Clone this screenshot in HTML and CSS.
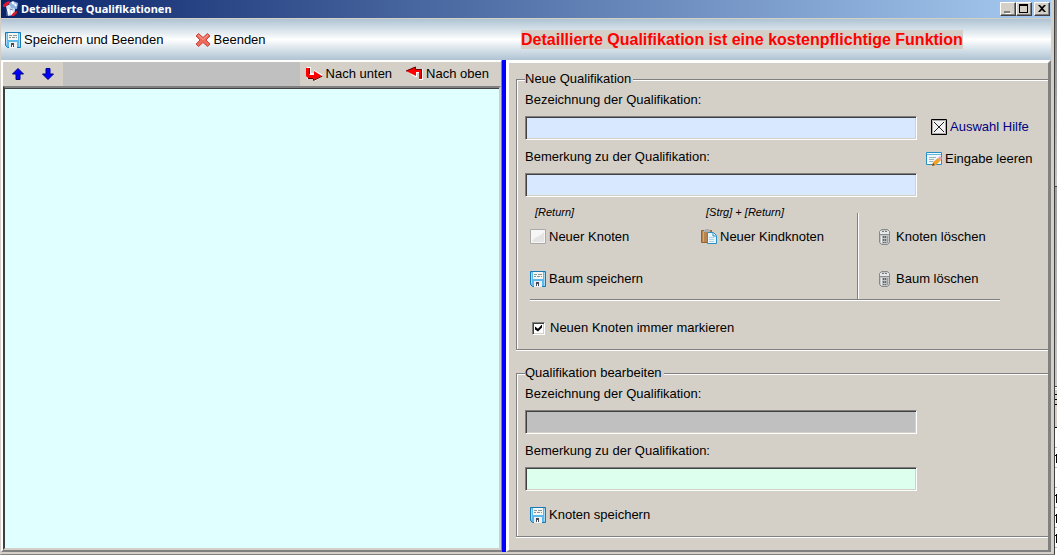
FILE: index.html
```html
<!DOCTYPE html>
<html lang="de">
<head>
<meta charset="utf-8">
<title>Detaillierte Qualifikationen</title>
<link rel="stylesheet" href="styles.css">
</head>

<body>
<svg class="defs" width="0" height="0" aria-hidden="true">
	<symbol id="disk" viewBox="0 0 16 16">
		<path d="M0.500 0.500h15v15h-13l-2-2z" fill="#5fb8ea" stroke="#1779b5"/>
		<path d="M1.500 1.500v11M14.500 1.500v13" stroke="#a5dcf8"/>
		<path d="M3 1h10v7H3z" fill="#f4f6f4"/>
		<path d="M4 3.500h3M8 3.500h4M4 5.500h2M7 5.500h3M11 5.500h1" stroke="#8a9694"/>
		<path d="M4 10h8v6H4z" fill="#edf0f2"/>
		<path d="M6 11h3v4H6z" fill="#444b52"/>
		<path d="M7 13h1v3H7z" fill="#fff"/>
	</symbol>
	<symbol id="bin" viewBox="0 0 16 16">
		<path d="M2.500 2.500l2-2h6l2 2v11l-2 2h-6l-2-2z" fill="#c3c5c6" stroke="#85898b"/>
		<path d="M3 2h9v3H3z" fill="#e6e7e7"/>
		<path d="M5 2h2v1H5zM8 2h2v1H8z" fill="#777"/>
		<path d="M3 5.500h9" stroke="#8c9092"/>
		<path d="M4.500 7v7" stroke="#eee"/>
		<path d="M6.500 7v7M8.500 7v7" stroke="#63686b" stroke-width="1.500" stroke-dasharray="2 1"/>
		<path d="M10.500 7v7" stroke="#9b9fa1"/>
	</symbol>
</svg>

<div class="desktop">
<div class="window">
	<div class="titlebar">
		<svg width="16" height="16" viewBox="0 0 16 16">
			<path d="M3 5l5-2 5 1-2 10-6 1z" fill="#cfe0f5"/>
			<path d="M6 2l4-2 5 2-1 6-6-1z" fill="#8fb2e0"/>
			<path d="M9 1l2 2M12 3l1 2M5 8l1 5M9 9v4" stroke="#fff" stroke-width="2"/>
			<path d="M0 6V4l3-3 4-1-1 3-4 3zM8 15l2-3 4-2v2l-3 3z" fill="#e0182a"/>
			<path d="M4 10v5M7 8l3 1" stroke="#6a86b8"/>
		</svg>
		<h1>Detaillierte Qualifikationen</h1>
		<button class="sys" type="button" aria-label="Minimieren"><svg width="12" height="10" viewBox="0 0 12 10"><path d="M3 9h6v1H4z" fill="#fff"/><path d="M2 7h6v2H2z" fill="#808080"/></svg></button>
		<button class="sys" type="button" aria-label="Maximieren"><svg width="12" height="10" viewBox="0 0 12 10"><path d="M1 0h9v9H1zM2 2v6h7V2z" fill="#000" fill-rule="evenodd"/></svg></button>
		<button class="sys close" type="button" aria-label="Schließen"><svg width="12" height="10" viewBox="0 0 12 10"><path d="M2 1h2l2 2 2-2h2L7 4.500 10 8H8L6 6 4 8H2l3-3.500z" fill="#000"/></svg></button>
	</div>

	<div class="toolbar">
		<div class="actions">
			<button class="tool" type="button"><svg width="16" height="16"><use href="#disk"/></svg>Speichern und Beenden</button>
			<button class="tool" type="button"><svg width="16" height="16" viewBox="0 0 16 16"><path d="M3.500 1.500L8 5.500l4.500-4 2.500 2.500L11 8l4 4-2.500 2.500L8 10.500l-4.500 4L1 12l4-4-4-4z" fill="#f0695a" stroke="#c8453a"/><path d="M3 3l5 4.500L13 3" fill="none" stroke="#f9a397"/></svg>Beenden</button>
		</div>
		<p class="notice"><strong>Detaillierte Qualifikation ist eine kostenpflichtige Funktion</strong></p>
	</div>

	<div class="main">
		<div class="left">
			<div class="treebar">
				<button class="arrow" type="button" aria-label="Hoch"><svg width="12" height="12" viewBox="0 0 12 12"><path d="M6 0.500l5.500 5.500H8v5.500H4V6H0.500z" fill="#00f" stroke="#000080"/></svg></button>
				<button class="arrow" type="button" aria-label="Runter"><svg width="12" height="12" viewBox="0 0 12 12"><path d="M6 11.500L0.500 6H4V0.500h4V6h3.500z" fill="#00f" stroke="#000080"/></svg></button>
				<span class="fill"></span>
				<button class="move" type="button"><svg width="18" height="16" viewBox="0 0 18 16"><path d="M1 1h4v6h3V4l9 5v1l-8 5H7v-2H1z" fill="#fff"/><path d="M0 2h3v7h5V5l8 5-8 4v-2H2l-2-2z" fill="#f00"/><path d="M3.500 2v6.500M2 12.500h5.500v2l9-4.500" fill="none" stroke="#600000"/></svg>Nach unten</button>
				<button class="move" type="button"><svg width="18" height="16" viewBox="0 0 18 16"><path d="M2 6l7 5h2V7h2v7h4V3h-6z" fill="#fff"/><path d="M0 5l9-4v2h7v10h-3V6h-3v4z" fill="#f00"/><path d="M0 5l9.500-4v2.500h6V12" fill="none" stroke="#600000"/></svg>Nach oben</button>
			</div>
			<div class="tree" role="tree" aria-label="Qualifikationen"></div>
		</div>

		<div class="splitter"></div>

		<div class="right">
			<fieldset>
				<legend>Neue Qualifikation</legend>
				<div class="top">
					<div class="fields">
						<label for="bez1">Bezeichnung der Qualifikation:</label>
						<input id="bez1" class="blue" type="text">
						<label for="bem1">Bemerkung zu der Qualifikation:</label>
						<input id="bem1" class="blue" type="text">
					</div>
					<div class="side">
						<button class="tool help" type="button"><svg width="16" height="16" viewBox="0 0 16 16"><path d="M0.500 0.500h15v15H0.500z" fill="#f2f2f2" stroke="#000"/><path d="M1.500 1.500h13v13h-13z" fill="none" stroke="#aaa"/><path d="M3 3l10 10M13 3L3 13" stroke="#222"/></svg>Auswahl Hilfe</button>
						<button class="tool" type="button"><svg width="16" height="16" viewBox="0 0 16 16"><path d="M0.500 1.500h15v12H0.500z" fill="#eef7fc" stroke="#2a8fc4"/><path d="M1 3.500h14" stroke="#64b9e4"/><path d="M3 6.500h7M3 8.500h5M3 10.500h4" stroke="#9fb3bd"/><path d="M6 15l1-4 5-4 3 2-5 5z" fill="#f2a22c"/><path d="M12 7l2-2 2 2-1 2z" fill="#e79ac0"/><path d="M6 15l1-3 2 2z" fill="#6b4a20"/></svg>Eingabe leeren</button>
					</div>
				</div>

				<div class="nodes">
					<div class="cell">
						<span class="key">[Return]</span>
						<button class="tool" type="button"><svg width="16" height="16" viewBox="0 0 16 16"><path d="M0.500 0.500h15v14H0.500z" fill="#f6f6f6" stroke="#aaa"/><path d="M2 13c2-6 7-4 12-10v10z" fill="#e4e4e4"/></svg>Neuer Knoten</button>
						<button class="tool" type="button"><svg width="16" height="16"><use href="#disk"/></svg>Baum speichern</button>
					</div>
					<div class="cell">
						<span class="key">[Strg] + [Return]</span>
						<button class="tool" type="button"><svg width="16" height="16" viewBox="0 0 16 16"><path d="M0.500 1.500h10v12H0.500z" fill="#b9854e" stroke="#946334"/><path d="M2.500 2v11" stroke="#d2a675"/><path d="M3 1l2-1h2l2 1v2H3z" fill="#a9b0b6"/><path d="M6.500 3.500h6l3 3v8h-9z" fill="#e9f6fd" stroke="#2f8fc0"/><path d="M12 4v3h3" fill="none" stroke="#2f8fc0"/><path d="M8 8.500h5M8 10.500h5M8 12.500h5" stroke="#a9d3e8"/></svg>Neuer Kindknoten</button>
					</div>
					<div class="cell delete">
						<button class="tool" type="button"><svg width="16" height="16"><use href="#bin"/></svg>Knoten löschen</button>
						<button class="tool" type="button"><svg width="16" height="16"><use href="#bin"/></svg>Baum löschen</button>
					</div>
				</div>

				<label class="check"><input type="checkbox" checked>Neuen Knoten immer markieren</label>
			</fieldset>

			<fieldset>
				<legend>Qualifikation bearbeiten</legend>
				<div class="fields">
					<label for="bez2">Bezeichnung der Qualifikation:</label>
					<input id="bez2" class="gray" type="text" readonly>
					<label for="bem2">Bemerkung zu der Qualifikation:</label>
					<input id="bem2" class="green" type="text">
				</div>
				<button class="tool save" type="button"><svg width="16" height="16"><use href="#disk"/></svg>Knoten speichern</button>
			</fieldset>
		</div>
	</div>
</div>

<!-- Rand des Fensters dahinter -->
<div class="behind">
	<div class="panel"></div>
	<div class="panel low"></div>
	<div class="head"></div>
	<div class="row"></div>
	<div class="row mark"></div>
	<div class="row"></div>
	<div class="row mark"></div>
	<div class="row mark"></div>
	<div class="row mark"></div>
	<div class="row"></div>
</div>
</div>
</body>
</html>
```

FILE: styles.css
```css
*{
	box-sizing:border-box;
}

body,h1,p,fieldset,legend{
	margin:0;
	padding:0;
}

body,button,input{
	font-family:"Liberation Sans",Arial,sans-serif;
	font-size:13px;
	line-height:16px;
	color:#000;
}

button{
	margin:0;
	padding:0;
	border:0;
	background:none;
}

svg{
	display:block;
	flex:none;
}

.defs{
	position:absolute;
}

.desktop{
	display:flex;
	height:100vh;
	overflow:hidden;
}

.window{
	flex:1;
	min-width:0;
	display:flex;
	flex-direction:column;
	background:#d4d0c8;
	border-left:1px solid #d4d0c8;
	border-right:1px solid #404040;
	border-bottom:1px solid #808080;
	padding:0 3px 2px 0;
}

/* Titelleiste */
.titlebar{
	display:flex;
	align-items:center;
	height:18px;
	padding:0 1px 0 2px;
	background:linear-gradient(to right,#0a246a,#a6caf0);
}

.titlebar h1{
	flex:1;
	margin-left:2px;
	font-family:"Noto Sans",Tahoma,sans-serif;
	font-size:11px;
	line-height:16px;
	font-weight:bold;
	color:#fff;
}

.sys{
	width:16px;
	height:14px;
	padding:1px;
	background:#d4d0c8;
	border:1px solid;
	border-color:#fff #404040 #404040 #fff;
	box-shadow:inset -1px -1px 0 #808080;
}

.close{
	margin-left:2px;
}

/* Werkzeugleiste */
.toolbar,.main{
	display:grid;
	grid-template-columns:minmax(0,501fr) 4px minmax(0,545fr);
}

.toolbar{
	height:41px;
	margin-top:1px;
	align-items:center;
	background:linear-gradient(to bottom,#afc3d3,#dde7ed 30%,#fff 50%,#dde7ed 70%,#afc3d3);
}

.actions{
	display:flex;
	gap:31px;
	padding-left:4px;
}

.tool{
	display:flex;
	align-items:center;
	gap:3px;
	white-space:nowrap;
}

.notice{
	grid-column:3;
	padding-left:15px;
	font-size:16px;
	line-height:19px;
	color:#f00;
}

.notice strong{
	display:inline-block;
	background:#d4d0c8;
}

.main{
	flex:1;
	min-height:0;
	grid-template-rows:minmax(0,1fr);
}

/* linke Seite */
.left{
	display:flex;
	flex-direction:column;
	border-top:1px solid #fff;
	border-left:2px solid #fff;
	border-right:1px solid #808080;
	border-bottom:2px solid #808080;
}

.treebar{
	display:flex;
	height:25px;
	border-top:1px solid #fff;
}

.arrow{
	display:flex;
	align-items:center;
	justify-content:center;
	width:30px;
}

.fill{
	flex:1;
	background:#c0c0c0;
}

.move{
	display:flex;
	align-items:center;
	gap:2px;
	padding:0 8px 0 6px;
}

.move + .move{
	padding-right:12px;
}

.tree{
	flex:1;
	background:#e0ffff;
	border:2px solid;
	border-color:#808080 #d4d0c8 #d4d0c8 #404040;
	box-shadow:inset 0 1px 0 #404040;
}

.splitter{
	background:#00f;
}

/* rechte Seite */
.right{
	border:3px solid;
	border-color:#fff #808080 #808080 #fff;
	border-bottom-width:2px;
	padding:8px 0 0 7px;
}

fieldset{
	min-width:0;
	padding:0 0 13px 8px;
	border:1px solid #808080;
	border-right:0;
	box-shadow:inset 1px 1px 0 #fff,0 1px 0 #fff;
}

fieldset + fieldset{
	margin-top:15px;
}

legend{
	padding:0 2px 0 0;
	background:#d4d0c8;
}

.top{
	display:flex;
	gap:9px;
}

.fields{
	display:flex;
	flex-direction:column;
	width:392px;
	padding-top:5px;
}

.fields label{
	margin-bottom:8px;
}

.fields input{
	height:24px;
	margin-bottom:9px;
	padding:2px;
	border:1px solid;
	border-color:#808080 #fff #fff #808080;
	box-shadow:inset 1px 1px 0 #404040,inset -1px -1px 0 #d4d0c8;
}

.blue{
	background:#d8e9ff;
}

.gray{
	background:#c0c0c0;
}

.green{
	background:#dcffee;
}

.side{
	display:flex;
	flex-direction:column;
	gap:16px;
	padding-top:32px;
}

.help{
	padding-left:5px;
	color:#000080;
}

.nodes{
	display:grid;
	grid-template-columns:171px 156px 143px;
	width:470px;
	height:87px;
	margin:7px 0 0 5px;
	border-bottom:1px solid #808080;
	box-shadow:0 1px 0 #fff;
}

.cell{
	display:flex;
	flex-direction:column;
	align-items:flex-start;
}

.key{
	margin:-9px 0 9px 5px;
	font-size:11px;
	font-style:italic;
	line-height:16px;
}

.cell .tool + .tool{
	margin-top:26px;
}

.delete{
	padding:16px 0 0 19px;
	border-left:1px solid #808080;
	box-shadow:inset 1px 0 0 #fff;
}

.check{
	display:flex;
	align-items:center;
	gap:5px;
	margin:20px 0 0 7px;
}

.check input{
	appearance:none;
	width:13px;
	height:13px;
	margin:0;
	border:1px solid;
	border-color:#808080 #fff #fff #808080;
	box-shadow:inset 1px 1px 0 #404040,inset -1px -1px 0 #d4d0c8;
	background:#fff;
}

.check input:checked::before{
	content:"";
	display:block;
	width:7px;
	height:7px;
	margin:2px;
	background:#000;
	clip-path:polygon(0 29%,43% 60%,100% 0,100% 43%,43% 100%,0 71%);
}

.save{
	margin:7px 0 0 5px;
}

/* Fenster dahinter */
.behind{
	width:2px;
	overflow:hidden;
	background:#fff;
}

.panel{
	height:187px;
	background:linear-gradient(#808080,#c4c4c4);
	border-bottom:1px solid #404040;
}

.low{
	height:200px;
	background:linear-gradient(#a0a0a0,#c8c8c8);
}

.head{
	height:41px;
	background:repeating-linear-gradient(#d4d0c8 0,#d4d0c8 4px,#000 4px,#000 5px) top/100% 15px no-repeat #d4d0c8;
	border-top:3px double #fff;
	border-bottom:1px solid #000;
}

.row{
	height:20px;
	border-bottom:1px solid #c0c0c0;
}

.mark{
	background:linear-gradient(#000,#000) 1px 6px/1px 9px no-repeat,linear-gradient(#000,#000) 0 7px/1px 1px no-repeat;
}
```
